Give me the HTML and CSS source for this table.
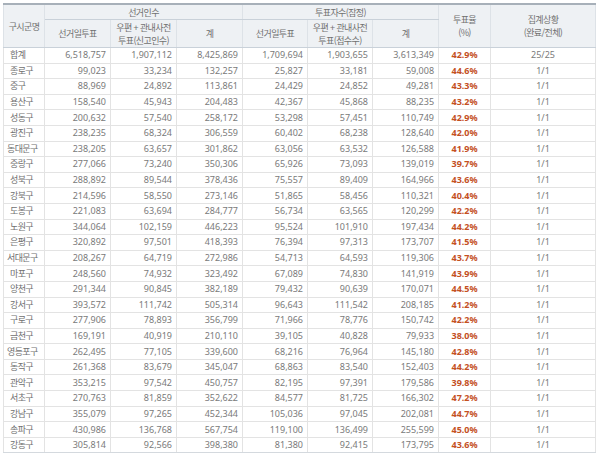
FILE: index.html
```html
<!DOCTYPE html>
<html lang="ko">
<head>
<meta charset="utf-8">
<link rel="stylesheet" href="styles.css">
</head>
<body>
<table class="tbl">
<colgroup>
<col class="c0"><col class="c1"><col class="c2"><col class="c3"><col class="c4"><col class="c5"><col class="c6"><col class="c7"><col class="c8">
</colgroup>
<thead>
<tr class="h1">
<th rowspan="2" class="first">구시군명</th>
<th colspan="3">선거인수</th>
<th colspan="3">투표자수(잠정)</th>
<th rowspan="2">투표율<br>(%)</th>
<th rowspan="2" class="last">집계상황<br>(완료/전체)</th>
</tr>
<tr class="h2">
<th>선거일투표</th>
<th>우편 + 관내사전<br>투표(신고인수)</th>
<th>계</th>
<th>선거일투표</th>
<th>우편 + 관내사전<br>투표(접수수)</th>
<th>계</th>
</tr>
</thead>
<tbody>
<tr><td class="name">합계</td><td>6,518,757</td><td>1,907,112</td><td>8,425,869</td><td>1,709,694</td><td>1,903,655</td><td>3,613,349</td><td class="pct">42.9%</td><td class="st">25/25</td></tr>
<tr><td class="name">종로구</td><td>99,023</td><td>33,234</td><td>132,257</td><td>25,827</td><td>33,181</td><td>59,008</td><td class="pct">44.6%</td><td class="st">1/1</td></tr>
<tr><td class="name">중구</td><td>88,969</td><td>24,892</td><td>113,861</td><td>24,429</td><td>24,852</td><td>49,281</td><td class="pct">43.3%</td><td class="st">1/1</td></tr>
<tr><td class="name">용산구</td><td>158,540</td><td>45,943</td><td>204,483</td><td>42,367</td><td>45,868</td><td>88,235</td><td class="pct">43.2%</td><td class="st">1/1</td></tr>
<tr><td class="name">성동구</td><td>200,632</td><td>57,540</td><td>258,172</td><td>53,298</td><td>57,451</td><td>110,749</td><td class="pct">42.9%</td><td class="st">1/1</td></tr>
<tr><td class="name">광진구</td><td>238,235</td><td>68,324</td><td>306,559</td><td>60,402</td><td>68,238</td><td>128,640</td><td class="pct">42.0%</td><td class="st">1/1</td></tr>
<tr><td class="name long">동대문구</td><td>238,205</td><td>63,657</td><td>301,862</td><td>63,056</td><td>63,532</td><td>126,588</td><td class="pct">41.9%</td><td class="st">1/1</td></tr>
<tr><td class="name">중랑구</td><td>277,066</td><td>73,240</td><td>350,306</td><td>65,926</td><td>73,093</td><td>139,019</td><td class="pct">39.7%</td><td class="st">1/1</td></tr>
<tr><td class="name">성북구</td><td>288,892</td><td>89,544</td><td>378,436</td><td>75,557</td><td>89,409</td><td>164,966</td><td class="pct">43.6%</td><td class="st">1/1</td></tr>
<tr><td class="name">강북구</td><td>214,596</td><td>58,550</td><td>273,146</td><td>51,865</td><td>58,456</td><td>110,321</td><td class="pct">40.4%</td><td class="st">1/1</td></tr>
<tr><td class="name">도봉구</td><td>221,083</td><td>63,694</td><td>284,777</td><td>56,734</td><td>63,565</td><td>120,299</td><td class="pct">42.2%</td><td class="st">1/1</td></tr>
<tr><td class="name">노원구</td><td>344,064</td><td>102,159</td><td>446,223</td><td>95,524</td><td>101,910</td><td>197,434</td><td class="pct">44.2%</td><td class="st">1/1</td></tr>
<tr><td class="name">은평구</td><td>320,892</td><td>97,501</td><td>418,393</td><td>76,394</td><td>97,313</td><td>173,707</td><td class="pct">41.5%</td><td class="st">1/1</td></tr>
<tr><td class="name long">서대문구</td><td>208,267</td><td>64,719</td><td>272,986</td><td>54,713</td><td>64,593</td><td>119,306</td><td class="pct">43.7%</td><td class="st">1/1</td></tr>
<tr><td class="name">마포구</td><td>248,560</td><td>74,932</td><td>323,492</td><td>67,089</td><td>74,830</td><td>141,919</td><td class="pct">43.9%</td><td class="st">1/1</td></tr>
<tr><td class="name">양천구</td><td>291,344</td><td>90,845</td><td>382,189</td><td>79,432</td><td>90,639</td><td>170,071</td><td class="pct">44.5%</td><td class="st">1/1</td></tr>
<tr><td class="name">강서구</td><td>393,572</td><td>111,742</td><td>505,314</td><td>96,643</td><td>111,542</td><td>208,185</td><td class="pct">41.2%</td><td class="st">1/1</td></tr>
<tr><td class="name">구로구</td><td>277,906</td><td>78,893</td><td>356,799</td><td>71,966</td><td>78,776</td><td>150,742</td><td class="pct">42.2%</td><td class="st">1/1</td></tr>
<tr><td class="name">금천구</td><td>169,191</td><td>40,919</td><td>210,110</td><td>39,105</td><td>40,828</td><td>79,933</td><td class="pct">38.0%</td><td class="st">1/1</td></tr>
<tr><td class="name long">영등포구</td><td>262,495</td><td>77,105</td><td>339,600</td><td>68,216</td><td>76,964</td><td>145,180</td><td class="pct">42.8%</td><td class="st">1/1</td></tr>
<tr><td class="name">동작구</td><td>261,368</td><td>83,679</td><td>345,047</td><td>68,863</td><td>83,540</td><td>152,403</td><td class="pct">44.2%</td><td class="st">1/1</td></tr>
<tr><td class="name">관악구</td><td>353,215</td><td>97,542</td><td>450,757</td><td>82,195</td><td>97,391</td><td>179,586</td><td class="pct">39.8%</td><td class="st">1/1</td></tr>
<tr><td class="name">서초구</td><td>270,763</td><td>81,859</td><td>352,622</td><td>84,577</td><td>81,725</td><td>166,302</td><td class="pct">47.2%</td><td class="st">1/1</td></tr>
<tr><td class="name">강남구</td><td>355,079</td><td>97,265</td><td>452,344</td><td>105,036</td><td>97,045</td><td>202,081</td><td class="pct">44.7%</td><td class="st">1/1</td></tr>
<tr><td class="name">송파구</td><td>430,986</td><td>136,768</td><td>567,754</td><td>119,100</td><td>136,499</td><td>255,599</td><td class="pct">45.0%</td><td class="st">1/1</td></tr>
<tr><td class="name">강동구</td><td>305,814</td><td>92,566</td><td>398,380</td><td>81,380</td><td>92,415</td><td>173,795</td><td class="pct">43.6%</td><td class="st">1/1</td></tr>
</tbody>
</table>
</body>
</html>
```
FILE: styles.css
```css
html, body {
  margin: 0;
  padding: 0;
  background: #ffffff;
}
body {
  padding: 3px 0 0 3px;
  font-family: "Noto Sans", "Noto Sans CJK KR", sans-serif;
  font-size: 9px;
  color: #7a7a7a;
}
.tbl {
  border-collapse: collapse;
  table-layout: fixed;
  width: 592px;
  border-top: 2px solid #a7b0b9;
}
.c0 { width: 41px; }
.c1, .c2, .c3, .c6 { width: 66px; }
.c4, .c5 { width: 65px; }
.c7 { width: 52px; }
.c8 { width: 105px; }
th {
  background: #eef1f4;
  font-weight: normal;
  font-family: "Noto Sans CJK KR", sans-serif;
  font-size: 9px;
  letter-spacing: -0.6px;
  color: #707070;
  border: 1px solid #dde2e7;
  border-bottom: 1px solid #c9d1d9;
  padding: 0;
  line-height: 13px;
  text-align: center;
  white-space: nowrap;
}
.h1 th { height: 14px; }
.h2 th { height: 27px; }
td {
  border: 1px solid #e3e3e3;
  height: 14.6px;
  padding: 0 4px 0 0;
  text-align: right;
  line-height: 12px;
  white-space: nowrap;
  overflow: visible;
}
td.name {
  text-align: left;
  padding: 0 0 0 6px;
  font-family: "Noto Sans CJK KR", sans-serif;
  font-size: 9px;
  letter-spacing: -0.6px;
  color: #707070;
}
td.name.long {
  padding-left: 3px;
}
td.pct {
  text-align: center;
  padding: 0;
  color: #c4501f;
  font-weight: bold;
}
td.st {
  text-align: center;
  padding: 0;
}
tbody tr:last-child td { border-bottom: 1px solid #d4d9de; }
```
